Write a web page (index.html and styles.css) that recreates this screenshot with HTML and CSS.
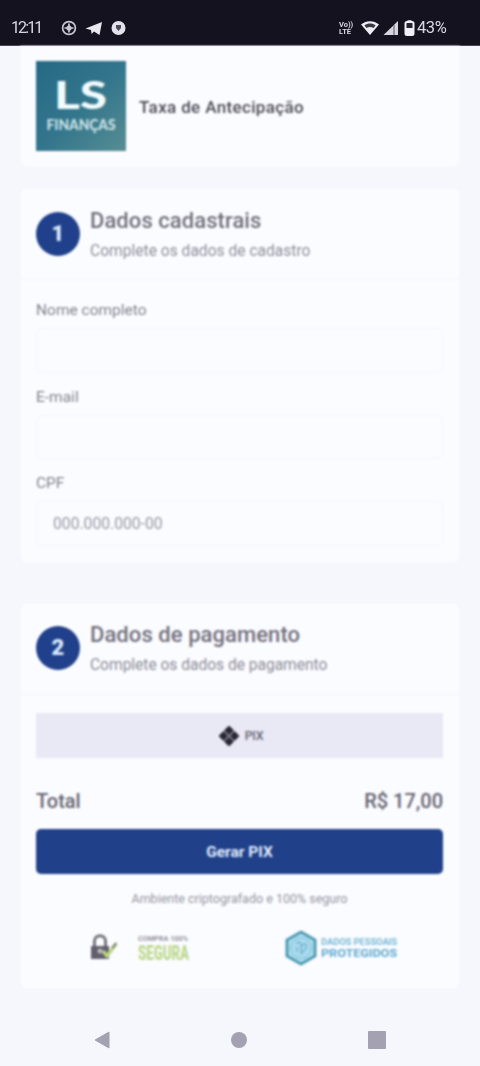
FILE: index.html
```html
<!DOCTYPE html>
<html lang="pt-BR">
<head>
<meta charset="utf-8">
<title>LS Finanças</title>
<link rel="stylesheet" href="styles.css">
</head>
<body>
<header class="status">
  <span class="clock">12:11</span>
  <svg class="status-left" width="66" height="18" viewBox="0 0 66 18">
    <circle cx="8" cy="9" r="6.4" fill="none" stroke="#c9c7d2" stroke-width="1.7"/>
    <path d="M8 4.5v9M3.5 9h9" stroke="#c9c7d2" stroke-width="1.7"/><circle cx="8" cy="9" r="2.6" fill="#c9c7d2"/>
    <path d="M24.500 9.600L41 3l-2.500 13-5.500-3.400-2.400 2.400-.6-4z" fill="#e9e7f0"/>
    <circle cx="57.500" cy="9" r="7" fill="#e4e2eb"/><path d="M55 6h5v3l-2.500 3L55 9z" fill="#4e4b59"/>
  </svg>
  <span class="network"><span>Vo))</span><span>LTE</span></span>
  <svg class="status-right" width="56" height="18" viewBox="0 0 56 18">
    <path d="M0 5.500C5 1 13 1 18 5.500L9 16z" fill="#eeecf4"/><path d="M3.400 6.500c3.500-2.600 7.700-2.600 11.200 0L12.500 9c-2-1.500-5-1.500-7 0z" fill="#3a3744"/>
    <path d="M22.500 16L37 2v14z" fill="#d6d4df"/><path d="M33 6v10" stroke="#5c5967" stroke-width="1"/>
    <rect x="44.500" y="3" width="8" height="13" rx="1.500" fill="#25222f" stroke="#f0eef6" stroke-width="2"/><path d="M46.500 1.300h4v2h-4zM45 9h7v6h-7z" fill="#f0eef6"/>
  </svg>
  <span class="battery">43%</span>
</header>
<main class="page">
  <section class="card product">
    <svg class="logo" width="90" height="90" viewBox="0 0 90 90">
      <defs>
        <linearGradient id="teal" x1="0" y1="0" x2="1" y2="1"><stop offset="0" stop-color="#266984"/><stop offset=".5" stop-color="#32758c"/><stop offset="1" stop-color="#568d93"/></linearGradient>
      </defs>
      <rect width="90" height="90" fill="url(#teal)"/>
      <text class="logo-name" x="18" y="47.500" textLength="53" lengthAdjust="spacingAndGlyphs">LS</text>
      <text class="logo-sub" x="10.500" y="68.500" textLength="69" lengthAdjust="spacingAndGlyphs">FINANÇAS</text>
    </svg>
    <h1 class="product-name">Taxa de Antecipação</h1>
  </section>

  <section class="card register">
    <div class="card-head">
      <span class="step">1</span>
      <div><h2 class="title title-register">Dados cadastrais</h2><p class="subtitle">Complete os dados de cadastro</p></div>
    </div>
    <form class="fields">
      <label class="field">Nome completo<input class="input" type="text"></label>
      <label class="field">E-mail<input class="input" type="text"></label>
      <label class="field">CPF<input class="input" type="text" placeholder="000.000.000-00"></label>
    </form>
  </section>

  <section class="card payment">
    <div class="card-head">
      <span class="step">2</span>
      <div><h2 class="title">Dados de pagamento</h2><p class="subtitle subtitle-payment">Complete os dados de pagamento</p></div>
    </div>
    <div class="checkout">
      <div class="method">
        <svg width="20" height="20" viewBox="0 0 20 20"><path d="M10 .5l4 4-4 4-4-4zM10 11.500l4 4-4 4-4-4zM4.500 6l4 4-4 4-4-4zM15.500 6l4 4-4 4-4-4z" fill="#292735" stroke="#292735" stroke-width="1.500" stroke-linejoin="round"/><path d="M7.500 7.500l5 5M12.500 7.500l-5 5" stroke="#77747f" stroke-width="1.800"/></svg>
        <span>PIX</span>
      </div>
      <div class="total"><span>Total</span><span class="price">R$ 17,00</span></div>
      <button class="pay" type="button">Gerar PIX</button>
      <p class="note">Ambiente criptografado e 100% seguro</p>
      <div class="seals">
        <svg width="104" height="36" viewBox="0 0 104 36">
          <path d="M5.500 17v-6c0-7 11-7 11 0v6" fill="none" stroke="#77757f" stroke-width="3"/>
          <path d="M2 16h18v13H2z" fill="#625f6c"/><circle cx="11" cy="21" r="2.500" fill="#bbb9c1"/>
          <path d="M14 21l4 5 9-12" fill="none" stroke="#bed583" stroke-width="3.500"/>
          <path d="M23 18l4.500-5" stroke="#7d8571" stroke-width="2"/>
          <text class="seal-small" x="49" y="10.500" textLength="50" lengthAdjust="spacingAndGlyphs">COMPRA 100%</text>
          <text class="seal-green" x="49" y="30" textLength="51" lengthAdjust="spacingAndGlyphs">SEGURA</text>
        </svg>
        <svg width="114" height="36" viewBox="0 0 114 36">
          <path d="M16 2l14 8v16l-14 8-14-8V10z" fill="#b4e0f0" stroke="#4f9bb4" stroke-width="3" stroke-linejoin="round"/>
          <circle cx="16" cy="18" r="10.500" fill="#a9daef" stroke="#7dbdd4"/>
          <path d="M11 14c2-3 5-2 5 1v9M16 17c3-5 7-3 5 1s-5 4-5 6M12 17v5" fill="none" stroke="#73b1ca" stroke-width="1.300"/>
          <text class="seal-blue-small" x="36" y="14.500" textLength="76" lengthAdjust="spacingAndGlyphs">DADOS PESSOAIS</text>
          <text class="seal-blue" x="36" y="27" textLength="76" lengthAdjust="spacingAndGlyphs">PROTEGIDOS</text>
        </svg>
      </div>
    </div>
  </section>
</main>
<nav class="nav">
  <svg width="16" height="18" viewBox="0 0 16 18"><path d="M1 9L15 1v16z" fill="#a4a2b2" stroke="#a4a2b2" stroke-linejoin="round"/></svg>
  <svg width="16" height="18" viewBox="0 0 16 18"><circle cx="8" cy="9" r="8" fill="#a4a2b2"/></svg>
  <svg width="18" height="18" viewBox="0 0 18 18"><rect width="18" height="18" rx="1" fill="#a4a2b2"/></svg>
</nav>
</body>
</html>
```

FILE: styles.css
```css
* { box-sizing: border-box; }
body { margin: 0; height: 1066px; overflow: hidden; display: flex; flex-direction: column; background: #f6f7fd; color: #666471; font-family: Roboto, "Liberation Sans", sans-serif; }
h1, h2, p { margin: 0; }
svg { display: block; flex: none; }
.status { height: 46px; flex: none; display: flex; align-items: flex-start; padding: 19px 31px 0 11px; background: #151220; border-bottom: 1px solid #4c4957; color: #d8d6e0; line-height: 18px; filter: blur(.6px); }
.clock { width: 50px; font-size: 16px; letter-spacing: -1.9px; }
.status-left { filter: blur(.3px); }
.network { margin-left: auto; width: 22px; display: flex; flex-direction: column; font-size: 7.5px; line-height: 7px; font-weight: 700; padding-top: 2px; }
.battery { font-size: 16.5px; letter-spacing: -.4px; width: 32px; }
.page { display: flex; flex-direction: column; padding: 0 20px; filter: blur(.8px); }
.card { background: #fbfcff; border: 1px solid #f7f8fe; border-radius: 7px; }
.product { height: 121px; padding: 14px 15px; display: flex; gap: 13px; border-radius: 0 0 7px 7px; }
.logo-name { font: 900 38px Lato, sans-serif; fill: #f2fbfe; }
.logo-sub { font: 900 15px Lato, sans-serif; fill: #cbe2e7; }
.product-name { padding-top: 34px; font-size: 17px; line-height: 24px; font-weight: 500; color: #4b4955; white-space: nowrap; letter-spacing: .36px; }
.register { height: 375px; margin-top: 21px; }
.payment { height: 386px; margin-top: 40px; }
.card-head { height: 91px; padding: 16px 15px; display: flex; gap: 10px; border-bottom: 1px solid #f4f5fc; }
.step { width: 44px; height: 44px; margin-top: 7px; border-radius: 50%; background: #20408b; color: #dbeaff; font-size: 22px; line-height: 44px; font-weight: 900; text-align: center; flex: none; }
.payment .card-head { padding-top: 15px; }
.title { font-size: 22px; line-height: 31px; font-weight: 500; letter-spacing: .07px; color: #716f7c; white-space: nowrap; }
.subtitle { font-size: 15.6px; line-height: 31px; color: #8e8c9a; white-space: nowrap; }
.subtitle-payment { letter-spacing: -.03px; }
.fields { padding: 20px 16px 0 15px; display: flex; flex-direction: column; gap: 14px; }
.field { display: flex; flex-direction: column; gap: 8px; font-size: 15.5px; line-height: 20px; color: #82808e; }
.input { width: 100%; height: 44.5px; padding: 0 16px; border: 1px solid #f4f5fb; border-radius: 6px; background: #fbfcff; font: 15.7px Roboto, sans-serif; outline: 0; }
.input::placeholder { color: #9896a5; opacity: 1; }
.checkout { padding: 18px 16px 0 15px; display: flex; flex-direction: column; }
.method { height: 45px; display: flex; align-items: center; justify-content: center; gap: 6px; background: #e9e8f5; font-size: 12.5px; letter-spacing: -.3px; padding-left: 3px; font-weight: 500; }
.total { display: flex; justify-content: space-between; margin-top: 28px; line-height: 30px; font-size: 20px; font-weight: 500; color: #656370; }
.pay { height: 45px; margin-top: 13px; border: 0; border-radius: 5px; background: #20418a; color: #e3eeff; font: 700 15.5px Roboto, sans-serif; }
.note { margin-top: 16px; font-size: 12.5px; line-height: 18px; text-align: center; color: #9694a2; white-space: nowrap; }
.seals { display: flex; justify-content: space-between; padding: 22px 44px 0 53px; }
.seal-small { font: 700 8px Roboto, sans-serif; fill: #96939f; }
.seal-green { font: 900 21px Roboto, sans-serif; fill: #bed990; }
.seal-blue-small { font: 700 8.5px Roboto, sans-serif; fill: #78bad6; }
.seal-blue { font: 700 11px Roboto, sans-serif; fill: #62acd0; }
.nav { display: flex; justify-content: space-between; padding: 42px 94px 0; filter: blur(.6px); }
```
